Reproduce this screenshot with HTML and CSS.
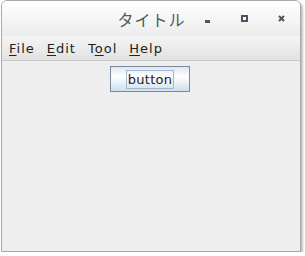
FILE: index.html
```html
<!DOCTYPE html>
<html lang="ja">
<head>
<meta charset="UTF-8">
<title>タイトル</title>
<link rel="stylesheet" href="styles.css">
</head>
<body>
  <div class="window">
    <div class="titlebar">
      <span class="title">タイトル</span>
      <div class="controls">
        <span class="ctl ctl-min"></span>
        <span class="ctl ctl-max"></span>
        <span class="ctl ctl-close">
          <svg width="7" height="7" viewBox="0 0 7 7"><path d="M1 1L6 6M6 1L1 6" stroke="#4a5560" stroke-width="2"/></svg>
        </span>
      </div>
    </div>
    <div class="menubar">
      <span class="menu"><u>F</u>ile</span>
      <span class="menu"><u>E</u>dit</span>
      <span class="menu">T<u>o</u>ol</span>
      <span class="menu"><u>H</u>elp</span>
    </div>
    <div class="content">
      <button class="btn"><span class="focus">button</span></button>
    </div>
  </div>
</body>
</html>
```

FILE: styles.css
```css
body {
  margin: 0;
  background: #fff;
  font-family: "DejaVu Sans", sans-serif;
}

.window {
  width: 298px;
  height: 250px;
  margin-left: 1px;
  border: 1px solid #a8a8a8;
  border-radius: 6px 6px 0 0;
  background: #eeeeee;
  box-shadow: 2px 2px 2px rgba(0, 0, 0, 0.25);
  display: flex;
  flex-direction: column;
  overflow: hidden;
}

.titlebar {
  height: 35px;
  flex: none;
  position: relative;
  background: linear-gradient(#ffffff, #ececec);
  display: flex;
  align-items: center;
  justify-content: center;
}

.title {
  font-family: "Noto Sans CJK JP", sans-serif;
  font-size: 16px;
  letter-spacing: 1px;
  color: #505a62;
  margin-left: 1px;
}

.controls {
  position: absolute;
  right: 0;
  top: 0;
  height: 35px;
  display: flex;
  align-items: center;
}

.ctl {
  width: 37px;
  height: 35px;
  display: flex;
  align-items: center;
  justify-content: center;
}

.ctl-min::before {
  content: "";
  width: 5px;
  height: 3px;
  margin-top: 6px;
  background: #4a5560;
}

.ctl-max::before {
  content: "";
  width: 3px;
  height: 3px;
  border: 2px solid #4a5560;
}

.menubar {
  height: 24px;
  flex: none;
  display: flex;
  align-items: center;
  padding-left: 6px;
  gap: 10px;
  background: linear-gradient(#f4f4f4, #e2e2e2);
  border-bottom: 1px solid #c8c8c8;
  font-size: 13px;
  letter-spacing: 1px;
  color: #222;
}

.menu {
  padding: 0 1px;
}

.menu u {
  text-underline-offset: 2px;
}

.content {
  flex: 1;
  display: flex;
  justify-content: center;
  align-items: flex-start;
  padding-top: 5px;
}

.btn {
  width: 80px;
  height: 26px;
  margin-right: 2px;
  border: 1px solid #7a8a99;
  border-radius: 0;
  background: linear-gradient(#dde8f3, #ffffff 40%, #cfdeee);
  font-family: "DejaVu Sans", sans-serif;
  font-size: 13px;
  letter-spacing: 0.3px;
  color: #222;
  padding: 0;
  display: flex;
  align-items: center;
  justify-content: center;
}

.focus {
  border: 1px solid #a3b8cc;
  padding: 1px 1px 1px 1px;
  line-height: 15px;
}
```
